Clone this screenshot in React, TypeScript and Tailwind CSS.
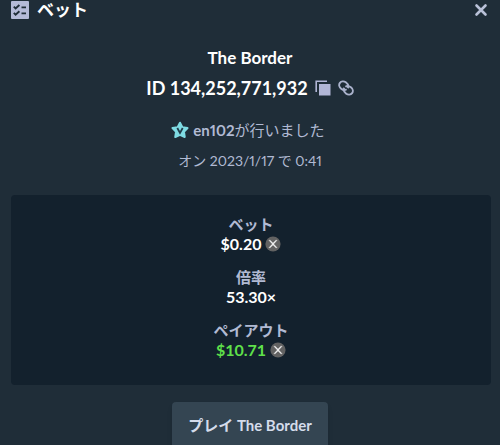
import type { ReactNode } from "react";

const BET = {
  game: "The Border",
  id: "134,252,771,932",
  player: "en102",
  date: "2023/1/17",
  time: "0:41",
};

function ChecklistIcon() {
  return (
    <svg viewBox="0 0 18 18" className="size-[18px] shrink-0" aria-hidden="true">
      <rect width="18" height="18" rx="1" fill="#b4bad8" />
      <g fill="none" stroke="#1f2d38" strokeWidth="1.9">
        <path d="M2.8 5.6l1.8 1.8L8.4 4M2.8 11.8l1.8 1.8 3.800-3.400" />
        <path d="M10.500 6.400H15M10.500 12.400H15" />
      </g>
    </svg>
  );
}

function CopyIcon() {
  return (
    <svg viewBox="0 0 16 16" className="size-4" aria-hidden="true">
      <path d="M1.2 12V1.2H12" fill="none" stroke="#b1b6d6" strokeWidth="1.6" />
      <rect x="4" y="4" width="11.5" height="11.5" fill="#b1b6d6" />
    </svg>
  );
}

function LinkIcon() {
  return (
    <svg viewBox="0 0 16 16" className="size-4" fill="none" stroke="#aab2cc" strokeWidth="1.9" aria-hidden="true">
      <path d="M8.600 9.300C7.200 10.200 4.800 10 3.100 8.700 1.100 7.200.6 4.700 1.900 2.900 3.200 1.100 5.800.8 7.800 2.300c2.100 1.600 3 4.100 1.900 5.900" />
      <path d="M7.400 6.700c1.400-.9 3.800-.7 5.500.6 2 1.500 2.500 4 1.200 5.800-1.300 1.800-3.900 2.100-5.900.6-2.100-1.600-3-4.100-1.900-5.900" />
    </svg>
  );
}

function StarBadge() {
  return (
    <svg viewBox="0 0 16 16" className="size-[18px]" aria-hidden="true">
      <path
        d="M8 1.500l2.100 4 4.600.8-3.200 3.200.7 4.700L8 12.200l-4.200 2 .7-4.700-3.200-3.200 4.600-.8z"
        fill="#7fdbe3"
        stroke="#7fdbe3"
        strokeWidth="1.800"
        strokeLinejoin="round"
      />
      <path d="M5.600 6.200L8 10.600l2.400-4.400" fill="none" stroke="#1f3a48" strokeWidth="1.600" />
    </svg>
  );
}

function CoinIcon() {
  return (
    <svg viewBox="0 0 16 16" className="size-4" aria-hidden="true">
      <circle cx="8" cy="8" r="7.600" fill="#626262" />
      <path d="M3.800 4.200h1.400L8 7l2.800-2.800h1.400L8.700 8l3.500 3.800h-1.400L8 9l-2.800 2.800H3.800L7.300 8z" fill="#f1f1f1" stroke="#f1f1f1" strokeWidth=".3" />
    </svg>
  );
}

function Stat({ label, children }: { label: string; children: ReactNode }) {
  return (
    <div className="flex flex-col items-center">
      <dt className="text-[15px] leading-5 font-bold text-[#b1bad3]">{label}</dt>
      <dd className="flex items-center gap-1 text-base leading-5 font-bold text-white">{children}</dd>
    </div>
  );
}

export default function App() {
  return (
    <main className="flex h-dvh flex-col overflow-hidden bg-[#1f2d38] font-[Lato,'Noto_Sans_CJK_JP',sans-serif] text-[#b1bad3]">
      <header className="flex h-5 shrink-0 items-center gap-2 pr-3 pl-[11px]">
        <ChecklistIcon />
        <h1 className="text-[17px] leading-5 font-bold text-white">ベット</h1>
        <button type="button" aria-label="閉じる" className="ml-auto">
          <svg viewBox="0 0 14 14" className="size-[14px]" aria-hidden="true">
            <path d="M2.500 2.500l9 9M11.500 2.500l-9 9" stroke="#b9c1d8" strokeWidth="2.600" strokeLinecap="round" />
          </svg>
        </button>
      </header>

      <section className="flex shrink-0 flex-col items-center pt-7">
        <h2 className="text-[17px] leading-5 font-bold text-white">{BET.game}</h2>
        <div className="mt-[10px] flex items-center gap-[7px] text-lg leading-5 font-bold text-white">
          <span>ID {BET.id}</span>
          <button type="button" aria-label="コピー"><CopyIcon /></button>
          <button type="button" aria-label="リンク"><LinkIcon /></button>
        </div>
        <p className="mt-[22px] flex items-center gap-1 pr-1 text-[15px] leading-5">
          <StarBadge />
          <span className="proportional-nums">
            <button type="button" className="font-bold">{BET.player}</button>が行いました
          </span>
        </p>
        <p className="mt-[11px] text-sm leading-5 proportional-nums">
          オン {BET.date} で {BET.time}
        </p>
      </section>

      <dl className="mr-[9px] ml-[11px] mt-6 flex shrink-0 flex-col gap-[13px] rounded-sm bg-[#13212d] pt-[19px] pb-[25px]">
        <Stat label="ベット">
          $0.20 <CoinIcon />
        </Stat>
        <Stat label="倍率">53.30×</Stat>
        <Stat label="ペイアウト">
          <span className="text-[#5fe04a]">$10.71</span> <CoinIcon />
        </Stat>
      </dl>

      <button
        type="button"
        className="mt-[17px] h-12 shrink-0 self-center rounded-sm bg-[#344552] px-4 pb-[2px] text-[15px] leading-5 font-bold text-[#d5dceb] shadow-md"
      >
        プレイ {BET.game}
      </button>
    </main>
  );
}
